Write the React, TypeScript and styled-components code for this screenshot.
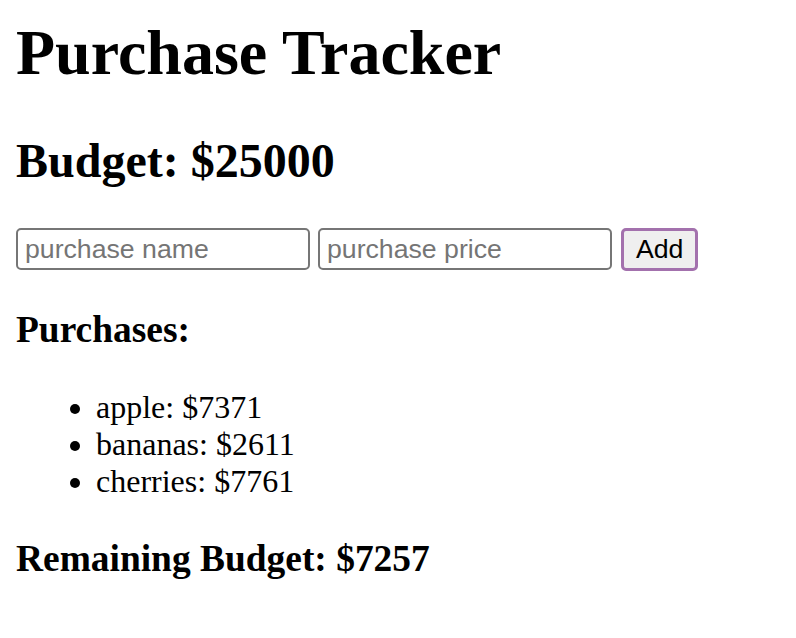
import React from "react";
import styled, { createGlobalStyle } from "styled-components";

const GlobalStyle = createGlobalStyle`
  html, body {
    background: #ffffff;
  }
  body {
    margin: 16px;
    font-family: "Liberation Serif", "Times New Roman", serif;
    font-size: 32px;
    color: #000000;
  }
`;

const Page = styled.div`
  display: block;
`;

const Title = styled.h1`
  font-size: 64px;
  font-weight: bold;
  margin: 0 0 42.88px 0;
`;

const Budget = styled.h2`
  font-size: 48px;
  font-weight: bold;
  margin: 39.84px 0;
`;

const FormRow = styled.form`
  display: flex;
  align-items: center;
  gap: 8px;
  margin: 0;
  padding-top: 0;
`;

const TextInput = styled.input`
  box-sizing: border-box;
  width: 294px;
  height: 42px;
  padding: 2px 7px;
  border: 2px solid #767676;
  border-radius: 5px;
  font-family: "Liberation Sans", Arial, sans-serif;
  font-size: 26.67px;
  color: #000;
  background: #fff;
  outline: none;
  &::placeholder {
    color: #757575;
  }
`;

const AddButton = styled.button`
  box-sizing: border-box;
  height: 43px;
  padding: 0 12px;
  margin-left: 1px;
  border: 3px solid #a371ad;
  border-radius: 5px;
  background: #efefef;
  font-family: "Liberation Sans", Arial, sans-serif;
  font-size: 26.67px;
  color: #000;
  cursor: pointer;
`;

const SubHeading = styled.h3`
  font-size: 37.44px;
  font-weight: bold;
  margin: 37.44px 0;
`;

const PurchaseList = styled.ul`
  margin: 32px 0;
  padding-left: 80px;
  list-style: disc;
`;

const PurchaseItem = styled.li`
  line-height: normal;
`;

const purchases = [
  { name: "apple", price: 7371 },
  { name: "bananas", price: 2611 },
  { name: "cherries", price: 7761 },
];

export default function App() {
  const budget = 25000;
  const remaining = budget - purchases.reduce((s, p) => s + p.price, 0);
  return (
    <Page>
      <GlobalStyle />
      <Title>Purchase Tracker</Title>
      <Budget>Budget: ${budget}</Budget>
      <FormRow onSubmit={(e) => e.preventDefault()}>
        <TextInput placeholder="purchase name" />
        <TextInput placeholder="purchase price" />
        <AddButton type="submit">Add</AddButton>
      </FormRow>
      <SubHeading>Purchases:</SubHeading>
      <PurchaseList>
        {purchases.map((p) => (
          <PurchaseItem key={p.name}>
            {p.name}: ${p.price}
          </PurchaseItem>
        ))}
      </PurchaseList>
      <SubHeading>Remaining Budget: ${remaining}</SubHeading>
    </Page>
  );
}
